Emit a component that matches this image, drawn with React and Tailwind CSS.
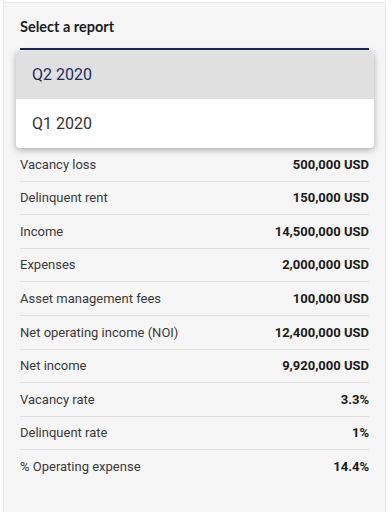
import React from 'react';

const rows = [
  ['Vacancy loss', '500,000 USD'],
  ['Delinquent rent', '150,000 USD'],
  ['Income', '14,500,000 USD'],
  ['Expenses', '2,000,000 USD'],
  ['Asset management fees', '100,000 USD'],
  ['Net operating income (NOI)', '12,400,000 USD'],
  ['Net income', '9,920,000 USD'],
  ['Vacancy rate', '3.3%'],
  ['Delinquent rate', '1%'],
  ['% Operating expense', '14.4%'],
];

const App = () => {
  return (
    <div className="w-full h-[512px] bg-white overflow-hidden pt-[2px] pl-[3px] pr-[6px]">
      <div className="relative h-[540px] bg-[#f5f5f5] border border-[#e8e8e8] px-4 font-['Roboto',sans-serif]">
        <div className="pt-[14px] text-[14.5px] font-bold text-[#1c1c1c] font-['Lato',sans-serif] leading-5">
          Select a report
        </div>
        <div className="h-[13px] border-b-2 border-[#1b2557]" />

        <div className="absolute left-[12px] right-[11px] top-[48px] z-10 bg-white rounded shadow-[0_2px_6px_rgba(0,0,0,0.3)] overflow-hidden">
          <div className="h-12 flex items-center px-4 bg-[#e0e0e0] text-[16px] text-[#1f2c5e]">
            Q2 2020
          </div>
          <div className="h-[49px] flex items-center px-4 text-[16px] text-[#333333]">
            Q1 2020
          </div>
        </div>

        <div className="pt-[98px]">
          {rows.map(([label, value], i) => (
            <div
              key={label}
              className={`h-[33.6px] flex items-center justify-between text-[13px] ${
                i < rows.length - 1 ? 'border-b border-[#e0e0e0]' : ''
              }`}
            >
              <span className="text-[#3a3a3a]">{label}</span>
              <span className="font-bold text-[#1a1a1a]">{value}</span>
            </div>
          ))}
        </div>
      </div>
    </div>
  );
};

export default App;
